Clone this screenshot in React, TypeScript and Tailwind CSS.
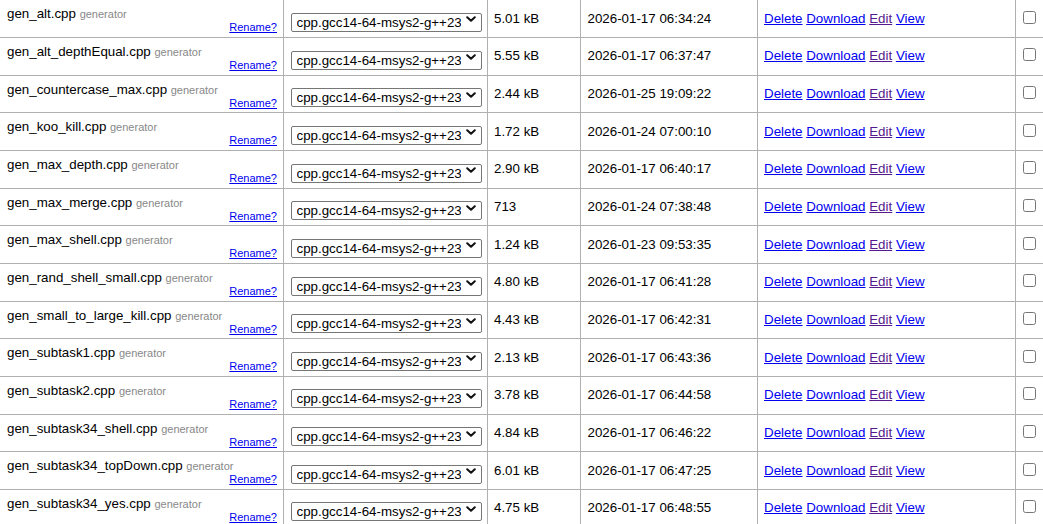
import React from "react";

type Row = { name: string; size: string; date: string };

const rows: Row[] = [
  { name: "gen_alt.cpp", size: "5.01 kB", date: "2026-01-17 06:34:24" },
  { name: "gen_alt_depthEqual.cpp", size: "5.55 kB", date: "2026-01-17 06:37:47" },
  { name: "gen_countercase_max.cpp", size: "2.44 kB", date: "2026-01-25 19:09:22" },
  { name: "gen_koo_kill.cpp", size: "1.72 kB", date: "2026-01-24 07:00:10" },
  { name: "gen_max_depth.cpp", size: "2.90 kB", date: "2026-01-17 06:40:17" },
  { name: "gen_max_merge.cpp", size: "713", date: "2026-01-24 07:38:48" },
  { name: "gen_max_shell.cpp", size: "1.24 kB", date: "2026-01-23 09:53:35" },
  { name: "gen_rand_shell_small.cpp", size: "4.80 kB", date: "2026-01-17 06:41:28" },
  { name: "gen_small_to_large_kill.cpp", size: "4.43 kB", date: "2026-01-17 06:42:31" },
  { name: "gen_subtask1.cpp", size: "2.13 kB", date: "2026-01-17 06:43:36" },
  { name: "gen_subtask2.cpp", size: "3.78 kB", date: "2026-01-17 06:44:58" },
  { name: "gen_subtask34_shell.cpp", size: "4.84 kB", date: "2026-01-17 06:46:22" },
  { name: "gen_subtask34_topDown.cpp", size: "6.01 kB", date: "2026-01-17 06:47:25" },
  { name: "gen_subtask34_yes.cpp", size: "4.75 kB", date: "2026-01-17 06:48:55" },
];

function Select() {
  return (
    <div className="relative mt-[1.5px] h-[19px] w-[191px]">
      <select
        defaultValue="cpp"
        className="h-[19px] w-[191px] appearance-none rounded-[2px] border border-[#767676] bg-white pl-[4.5px] pr-[20px] text-[13.33px] leading-[17px] text-black outline-none"
      >
        <option value="cpp">cpp.gcc14-64-msys2-g++23</option>
      </select>
      <svg
        className="pointer-events-none absolute right-[6px] top-[6.5px]"
        width="10"
        height="6"
        viewBox="0 0 10 6"
        fill="none"
      >
        <path d="M1.2 1.2 L5 4.8 L8.8 1.2" stroke="#111" strokeWidth="2" strokeLinecap="round" strokeLinejoin="round" />
      </svg>
    </div>
  );
}

function TableRow({ row }: { row: Row }) {
  return (
    <div className="flex h-[37.67px] border-b border-[#b0b0b0]">
      <div className="w-[284px] shrink-0 border-r border-[#b0b0b0] pl-[7px] pr-[6px] pt-[6px]">
        <div className="whitespace-nowrap text-[13.33px] leading-[15px]">
          {row.name} <span className="text-[11px] leading-none text-[#888888]">generator</span>
        </div>
        <div className="text-right text-[11px] leading-[12.5px]">
          <a href="#" className="text-[#0000ee] underline">
            Rename?
          </a>
        </div>
      </div>
      <div className="flex w-[204px] shrink-0 items-center border-r border-[#b0b0b0] pl-[7px]">
        <Select />
      </div>
      <div className="flex w-[93px] shrink-0 items-center border-r border-[#b0b0b0] pl-[6px] text-[13.33px]">
        {row.size}
      </div>
      <div className="flex w-[177px] shrink-0 items-center border-r border-[#b0b0b0] pl-[6.5px] text-[13.33px]">
        {row.date}
      </div>
      <div className="flex w-[258px] shrink-0 items-center whitespace-nowrap border-r border-[#b0b0b0] pl-[6px] text-[13.33px]">
        <span>
          <a href="#" className="text-[#0000ee] underline">
            Delete
          </a>{" "}
          <a href="#" className="text-[#0000ee] underline">
            Download
          </a>{" "}
          <a href="#" className="text-[#551a8b] underline">
            Edit
          </a>{" "}
          <a href="#" className="text-[#0000ee] underline">
            View
          </a>
        </span>
      </div>
      <div className="w-[60px] shrink-0 border-r border-[#b0b0b0] pl-[7px] pt-[10.5px]">
        <input type="checkbox" className="m-0 block h-[13px] w-[13px]" />
      </div>
    </div>
  );
}

export default function App() {
  return (
    <div className="h-[524px] w-[1043px] overflow-hidden bg-white font-['Liberation_Sans',Arial,sans-serif] text-black">
      <div className="mt-[0.33px] w-[1100px]">
        {rows.map((r) => (
          <TableRow key={r.name} row={r} />
        ))}
      </div>
    </div>
  );
}
